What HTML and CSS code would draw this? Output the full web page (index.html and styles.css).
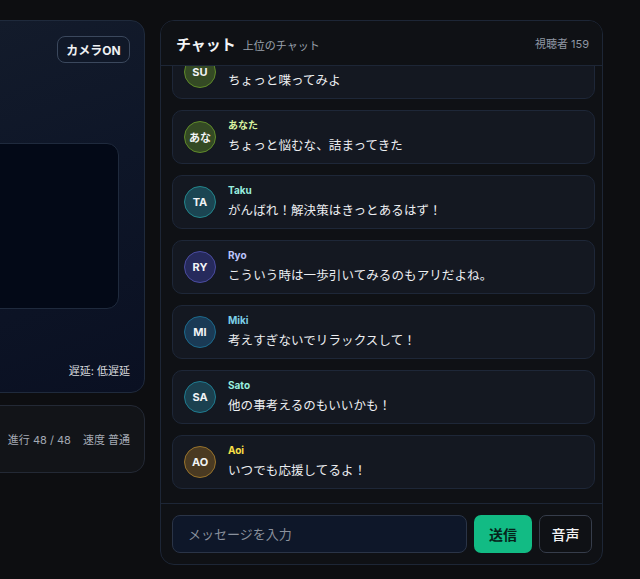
FILE: index.html
```html
<!DOCTYPE html>
<html lang="ja">
<head>
<meta charset="utf-8">
<link rel="stylesheet" href="styles.css">
</head>
<body>
<div class="layout">
  <section class="stage">
    <div class="video-card">
      <div class="video-top">
        <button class="cam-btn">カメラON</button>
      </div>
      <div class="video-inner"></div>
      <div class="latency">遅延: 低遅延</div>
    </div>
    <div class="status-card">
      <span>進行 48 / 48</span>
      <span>速度 普通</span>
    </div>
  </section>

  <section class="chat">
    <header class="chat-head">
      <div class="chat-title">
        <h2>チャット</h2>
        <span class="chat-sub">上位のチャット</span>
      </div>
      <span class="viewers">視聴者 159</span>
    </header>
    <div class="messages">
      <div class="msg">
        <div class="avatar av-green">SU</div>
        <div class="msg-body"><div class="name n-lime">Su</div><div class="text">ちょっと喋ってみよ</div></div>
      </div>
      <div class="msg">
        <div class="avatar av-green">あな</div>
        <div class="msg-body"><div class="name n-lime">あなた</div><div class="text">ちょっと悩むな、詰まってきた</div></div>
      </div>
      <div class="msg">
        <div class="avatar av-teal">TA</div>
        <div class="msg-body"><div class="name n-teal">Taku</div><div class="text">がんばれ！解決策はきっとあるはず！</div></div>
      </div>
      <div class="msg">
        <div class="avatar av-indigo">RY</div>
        <div class="msg-body"><div class="name n-indigo">Ryo</div><div class="text">こういう時は一歩引いてみるのもアリだよね。</div></div>
      </div>
      <div class="msg">
        <div class="avatar av-sky">MI</div>
        <div class="msg-body"><div class="name n-sky">Miki</div><div class="text">考えすぎないでリラックスして！</div></div>
      </div>
      <div class="msg">
        <div class="avatar av-cyan">SA</div>
        <div class="msg-body"><div class="name n-teal">Sato</div><div class="text">他の事考えるのもいいかも！</div></div>
      </div>
      <div class="msg">
        <div class="avatar av-amber">AO</div>
        <div class="msg-body"><div class="name n-yellow">Aoi</div><div class="text">いつでも応援してるよ！</div></div>
      </div>
    </div>
    <footer class="composer">
      <input class="input" type="text" placeholder="メッセージを入力">
      <button class="send">送信</button>
      <button class="voice">音声</button>
    </footer>
  </section>
</div>
</body>
</html>
```

FILE: styles.css
```css
* { box-sizing: border-box; }
html, body { margin: 0; padding: 0; }
body {
  background: #0d0e11;
  font-family: "Inter", "Noto Sans CJK JP", "Noto Sans", sans-serif;
  color: #e6e8ec;
  width: 640px;
  height: 579px;
  overflow: hidden;
}
.layout {
  display: flex;
  gap: 15px;
  padding-top: 20px;
  margin-left: -195px;
}
.stage {
  width: 340px;
  flex: none;
  display: flex;
  flex-direction: column;
  gap: 12px;
}
.video-card {
  height: 373px;
  border: 1px solid #1f2a3c;
  border-radius: 14px;
  background: linear-gradient(160deg, #151d2c 0%, #0e1628 50%, #0a1022 100%);
  padding: 15px 14px 14px 14px;
  display: flex;
  flex-direction: column;
}
.video-top {
  display: flex;
  justify-content: flex-end;
}
.cam-btn {
  height: 27px;
  width: 73px;
  padding: 0;
  border: 1px solid #3b485d;
  border-radius: 8px;
  background: #101828;
  color: #eef0f3;
  font-family: inherit;
  font-size: 12px;
  font-weight: 700;
}
.video-inner {
  margin-top: 80px;
  margin-right: 11px;
  height: 166px;
  border: 1px solid #1f2a3d;
  border-radius: 12px;
  background: #030917;
}
.latency {
  margin-top: auto;
  text-align: right;
  font-size: 11px;
  line-height: 14px;
  color: #d7dade;
}
.status-card {
  height: 68px;
  border: 1px solid #232935;
  border-radius: 14px;
  background: #121418;
  display: flex;
  justify-content: flex-end;
  align-items: center;
  gap: 12px;
  padding: 0 14px;
  font-size: 11px;
  color: #a4aab4;
}

.chat {
  width: 443px;
  height: 545px;
  flex: none;
  border: 1px solid #1d2636;
  border-radius: 14px;
  background: #0f1115;
  display: flex;
  flex-direction: column;
  overflow: hidden;
}
.chat-head {
  height: 45px;
  flex: none;
  display: flex;
  align-items: center;
  justify-content: space-between;
  padding: 0 13px 0 15px;
  border-bottom: 1px solid #1d2636;
  position: relative;
  z-index: 1;
  background: #0f1115;
}
.chat-title {
  display: flex;
  align-items: baseline;
  gap: 7px;
}
.chat-title h2 {
  margin: 0;
  font-size: 15px;
  font-weight: 700;
  color: #f3f4f6;
}
.chat-sub {
  font-size: 11px;
  color: #9aa1ac;
}
.viewers {
  font-size: 11px;
  color: #8e96a3;
}
.messages {
  flex: 1;
  min-height: 0;
  overflow: hidden;
  display: flex;
  flex-direction: column;
  justify-content: flex-end;
  gap: 11px;
  padding: 0 7px 14px 11px;
}
.msg {
  flex: none;
  height: 54px;
  display: flex;
  align-items: center;
  gap: 12px;
  padding: 0 11px;
  border: 1px solid #1e2738;
  border-radius: 10px;
  background: #141821;
}
.avatar {
  width: 32px;
  height: 32px;
  flex: none;
  border-radius: 50%;
  display: flex;
  align-items: center;
  justify-content: center;
  font-size: 11px;
  font-weight: 700;
  color: #f1f3f5;
  border: 1px solid;
}
.av-green { background: #344a24; border-color: #5f8a2a; }
.av-teal { background: #1b4552; border-color: #23868c; }
.av-indigo { background: #262a5c; border-color: #4b4ca0; }
.av-sky { background: #1a3a55; border-color: #1c6a8c; }
.av-cyan { background: #1b4150; border-color: #1f7c90; }
.av-amber { background: #4a3a22; border-color: #98732c; }
.msg-body {
  display: flex;
  flex-direction: column;
  gap: 4px;
}
.name {
  font-size: 10px;
  font-weight: 700;
  line-height: 13px;
}
.n-lime { color: #d9f2a0; }
.n-teal { color: #99eedf; }
.n-indigo { color: #bcc4fa; }
.n-sky { color: #7dd0e8; }
.n-yellow { color: #fbe046; }
.text {
  font-size: 12.5px;
  line-height: 20px;
  color: #eceef1;
  letter-spacing: 0.1px;
}
.composer {
  flex: none;
  height: 61px;
  border-top: 1px solid #1d2636;
  display: flex;
  align-items: center;
  gap: 7px;
  padding: 0 10px 0 11px;
}
.input {
  flex: 1;
  height: 38px;
  min-width: 0;
  border: 1px solid #2a3447;
  border-radius: 8px;
  background: #0e1729;
  padding: 0 15px;
  font-family: inherit;
  font-size: 13px;
  color: #e6e8ec;
}
.input::placeholder { color: #8a919d; }
.send {
  width: 58px;
  height: 38px;
  border: none;
  border-radius: 7px;
  background: #12bb84;
  color: #05231a;
  font-family: inherit;
  font-size: 14px;
  font-weight: 700;
}
.voice {
  width: 53px;
  height: 38px;
  border: 1px solid #363d4b;
  border-radius: 7px;
  background: #0f1115;
  color: #f1f2f4;
  font-family: inherit;
  font-size: 14px;
  font-weight: 500;
}
```
